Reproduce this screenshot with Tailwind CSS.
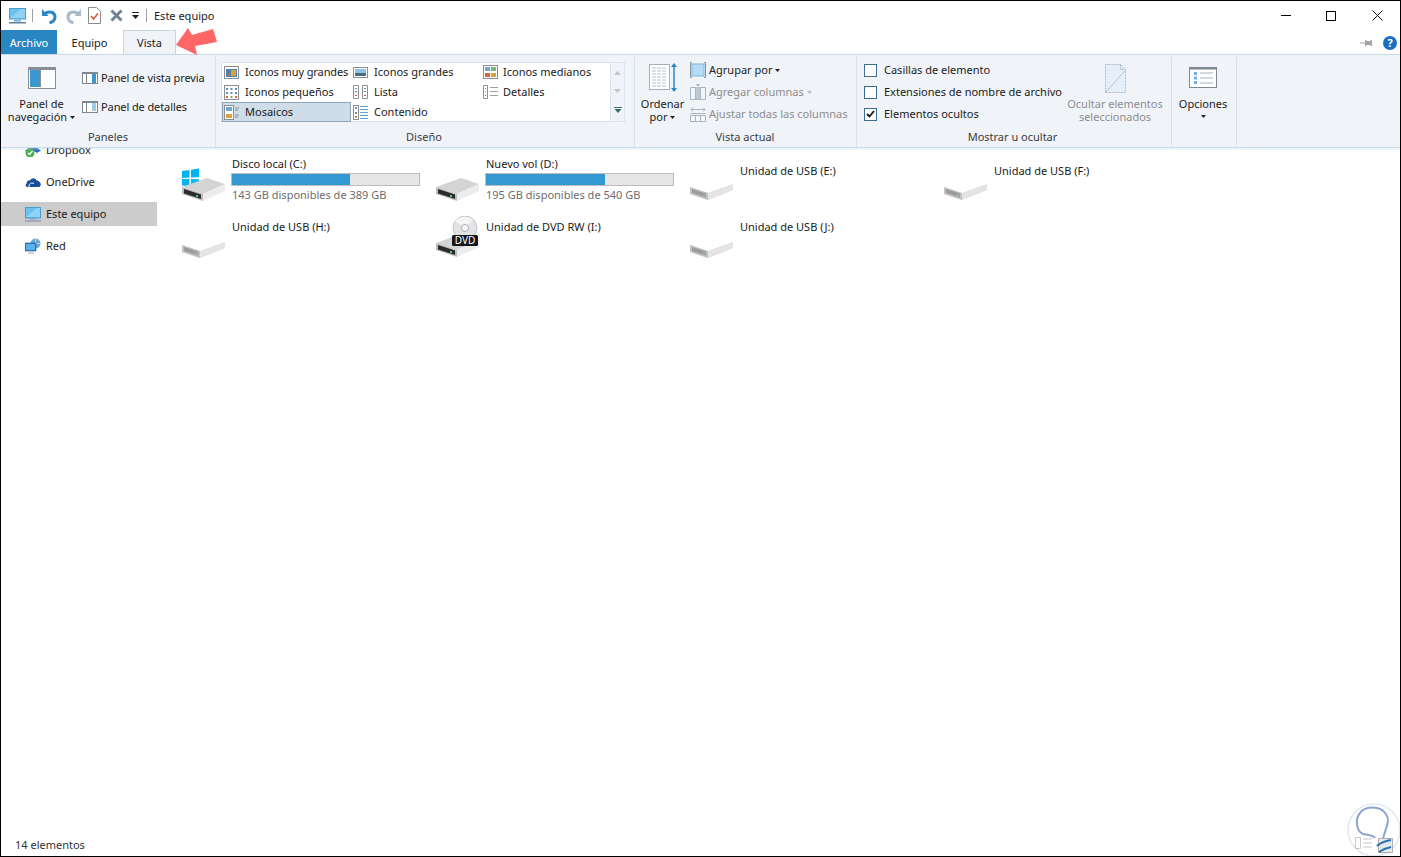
<!DOCTYPE html>
<html><head><meta charset="utf-8"><script src="https://cdn.jsdelivr.net/npm/@tailwindcss/browser@4"></script></head>
<body class="m-0 bg-white">
<div class="w-[1401px] h-[857px] border border-black bg-white text-[11px] leading-[16px] whitespace-nowrap text-[#1a1a1a] font-['Noto_Sans','Open_Sans',sans-serif] flex flex-col overflow-hidden relative">
  <!-- title bar -->
  <div class="h-[29px] flex items-center shrink-0">
    <svg class="ml-[8px]" width="17" height="16" viewBox="0 0 17 16"><rect x="0.5" y="0.5" width="16" height="10.5" fill="#6cc0f0" stroke="#4a9bd0"/><path d="M1 10L12 1h4v9z" fill="#8fd3f6"/><rect x="5" y="12" width="7" height="1.5" fill="#7aa7c7"/><rect x="0" y="14" width="17" height="1.5" fill="#5f7fa0"/></svg>
    <div class="w-px h-[13px] bg-[#a0a0a0] ml-[6px]"></div>
    <svg class="ml-[9px]" width="15" height="16" viewBox="0 0 15 16"><path d="M0 1v7h6.500z" fill="#2a86c4"/><path d="M2.500 6C7 2.500 13 4 13 9c0 3-2.500 5-5.500 6" fill="none" stroke="#2a86c4" stroke-width="3"/></svg>
    <svg class="ml-[9px]" width="15" height="16" viewBox="0 0 15 16"><path d="M15 1v7H8.500z" fill="#a9b8c6"/><path d="M12.500 6C8 2.500 2 4 2 9c0 3 2.500 5 5.500 6" fill="none" stroke="#a9b8c6" stroke-width="3"/></svg>
    <svg class="ml-[7px]" width="13" height="17" viewBox="0 0 13 17"><path d="M.5.500h8l4 4v12H.5z" fill="#fff" stroke="#8c8c8c"/><path d="M3 9l2.500 3L10 6.500" fill="none" stroke="#d9582b" stroke-width="1.500"/></svg>
    <svg class="ml-[9px]" width="13" height="13" viewBox="0 0 13 13"><path d="M1.500 1.500l10 10M11.500 1.500l-10 10" stroke="#6d8398" stroke-width="3"/></svg>
    <svg class="ml-[9px]" width="8" height="8" viewBox="0 0 8 8"><rect x="0" y="0" width="7" height="1" fill="#222"/><path d="M0 3h7L3.500 7z" fill="#222"/></svg>
    <div class="w-px h-[13px] bg-[#a0a0a0] ml-[6px]"></div>
    <span class="ml-[7px]">Este equipo</span>
    <div class="ml-auto flex items-center mr-[17px] gap-[35px]">
      <div class="w-[10px] h-px bg-black"></div>
      <div class="w-[10px] h-[10px] border border-black mr-[1px]"></div>
      <svg width="11" height="11" viewBox="0 0 11 11"><path d="M.5.500l10 10M10.500.500l-10 10" stroke="#111" stroke-width="1"/></svg>
    </div>
  </div>
  <!-- tabs -->
  <div class="h-[24px] flex items-stretch shrink-0 relative">
    <div class="w-[56px] bg-[#2a86c0] text-white flex items-center justify-center pt-[2px]">Archivo</div>
    <div class="w-[66px] flex items-center justify-center pt-[2px] pr-[1px]">Equipo</div>
    <div class="w-[53px] h-[25px] bg-[#f0f4f9] border border-b-0 border-[#c6d8e6] flex items-center justify-center relative z-10">Vista</div>
    <div class="ml-auto flex items-center gap-[11px] mr-[3px] pt-[2px]">
      <svg width="12" height="8" viewBox="0 0 12 8"><path d="M0 3.500h5V1h1l1 1h3l1-1h1v6h-1l-1-1H7L6 7H5V4.500H0z" fill="#a5a5a5"/></svg>
      <div class="w-[14px] h-[14px] rounded-full bg-[#1b6fc2] text-white font-bold text-[11px] leading-[14px] text-center">?</div>
    </div>
    <svg class="absolute left-[172px] top-[-3px] z-20" width="46" height="29" viewBox="0 0 46 29"><path d="M3 18L15 1l4 7 21-6 4 13-22 4 2 9z" fill="#ff6666"/></svg>
  </div>
  <!-- ribbon -->
  <div class="h-[94px] bg-[#f0f4f9] border-t border-[#c6d8e6] border-b border-b-[#c9dcea] shrink-0 flex relative z-10 shadow-[0_1px_2px_rgba(190,210,225,0.5)]">
    <!-- Paneles -->
    <div class="w-[215px] border-r border-[#dbe1e8] mt-[2px] flex flex-col shrink-0">
      <div class="flex-1 flex">
        <div class="w-[81px] flex flex-col items-center">
          <svg class="mt-[10px]" width="28" height="22" viewBox="0 0 28 22"><rect x=".5" y=".5" width="27" height="21" fill="#fff" stroke="#8a8f96"/><rect x="1" y="1" width="26" height="2" fill="#8a8f96"/><rect x="2" y="3" width="10" height="17" fill="#3a97d0"/><rect x="12" y="3" width="1" height="17" fill="#8a8f96"/></svg>
          <div class="text-center leading-[13px] mt-[8px]">Panel de<br>navegación<svg class="inline-block ml-[3px] align-[2px]" width="5" height="3" viewBox="0 0 5 3"><path d="M0 0h5L2.500 3z" fill="#222"/></svg></div>
        </div>
        <div class="flex flex-col">
          <div class="flex items-center mt-[13px] gap-[3px]">
            <svg width="16" height="12" viewBox="0 0 16 12"><rect x=".5" y=".5" width="15" height="11" fill="#fff" stroke="#7f8790"/><rect x="1" y="1" width="14" height="1" fill="#7f8790"/><rect x="4" y="2" width="1" height="9" fill="#7f8790"/><rect x="10" y="2" width="4" height="9" fill="#3a97d0"/></svg>
            <span class="tracking-[-0.1px]">Panel de vista previa</span>
          </div>
          <div class="flex items-center mt-[13px] gap-[3px]">
            <svg width="16" height="12" viewBox="0 0 16 12"><rect x=".5" y=".5" width="15" height="11" fill="#fff" stroke="#7f8790"/><rect x="1" y="1" width="14" height="1" fill="#7f8790"/><rect x="4" y="2" width="1" height="9" fill="#7f8790"/><path d="M10 3h4M10 5h4M10 7h4M10 9h4" stroke="#3a97d0"/></svg>
            <span class="tracking-[-0.1px]">Panel de detalles</span>
          </div>
        </div>
      </div>
      <div class="h-[17px] text-center text-[#3c3c3c] mb-[1px]">Paneles</div>
    </div>
    <!-- Diseño -->
    <div class="w-[419px] border-r border-[#dbe1e8] mt-[2px] flex flex-col shrink-0">
      <div class="flex-1 pl-[5px] pt-[5px]">
        <div class="w-[404px] h-[60px] bg-white border border-[#dbe5ee] flex">
          <div class="flex-1 grid grid-cols-[129px_129px_1fr] grid-rows-[20px_20px_20px] mt-[-1px]">
            <div class="flex items-center"><svg class="ml-[2px] mr-[6px]" width="15" height="13" viewBox="0 0 15 13"><rect x=".5" y=".5" width="14" height="12" fill="#fff" stroke="#8a8f96"/><rect x="2" y="3" width="11" height="8" fill="#4b83b0"/><rect x="7" y="4" width="5" height="6" fill="#d9a23b"/><rect x="3" y="7" width="3" height="3" fill="#d65a35"/></svg><span class="tracking-[-0.1px]">Iconos muy grandes</span></div>
            <div class="flex items-center"><svg class="ml-[2px] mr-[6px]" width="15" height="13" viewBox="0 0 15 13"><rect x=".5" y="1.500" width="14" height="10" fill="#fff" stroke="#8a8f96"/><rect x="2" y="3" width="11" height="4" fill="#8cc4e8"/><rect x="2" y="7" width="11" height="3" fill="#4d6a7e"/></svg><span>Iconos grandes</span></div>
            <div class="flex items-center"><svg class="ml-[3px] mr-[5px]" width="15" height="14" viewBox="0 0 15 14"><rect x=".5" y=".5" width="14" height="13" fill="#fff" stroke="#8a8f96"/><rect x="2" y="2" width="5" height="4" fill="#6fa9d4"/><rect x="8" y="2" width="5" height="4" fill="#7fb27a"/><rect x="2" y="8" width="5" height="4" fill="#d6643c"/><rect x="8" y="8" width="5" height="4" fill="#d9a23b"/></svg><span>Iconos medianos</span></div>
            <div class="flex items-center"><svg class="ml-[2px] mr-[6px]" width="15" height="15" viewBox="0 0 15 15"><rect x=".5" y=".5" width="14" height="14" fill="#fff" stroke="#8a8f96"/><path d="M2 3h2v2H2zM6.500 3h2v2h-2zM11 3h2v2h-2zM2 7h2v2H2zM6.500 7h2v2h-2zM11 7h2v2h-2z" fill="#6d8ea8"/><path d="M2 11h2v2H2zM11 11h2v2h-2z" fill="#cf6a3f"/><path d="M6.500 11h2v2h-2z" fill="#7fa35d"/></svg><span>Iconos pequeños</span></div>
            <div class="flex items-center"><svg class="ml-[2px] mr-[6px]" width="15" height="14" viewBox="0 0 15 14"><path d="M.5.500h5v13h-5zM9.500.500h5v13h-5z" fill="#fff" stroke="#8a8f96"/><path d="M2 3h2v1H2zM2 6h2v1H2zM11 3h2v1h-2zM11 6h2v1h-2z" fill="#6d8ea8"/><path d="M2 10h2v1H2zM11 10h2v1h-2z" fill="#cf4a3f"/></svg><span>Lista</span></div>
            <div class="flex items-center"><svg class="ml-[3px] mr-[5px]" width="15" height="14" viewBox="0 0 15 14"><path d="M.5.500h4v13h-4z" fill="#fff" stroke="#8a8f96"/><path d="M2 3h1v1H2zM2 6h1v1H2z" fill="#6d8ea8"/><path d="M2 10h1v1H2z" fill="#cf4a3f"/><path d="M7 2.500h8M7 6.500h8M7 10.500h8" stroke="#9aa0a6"/></svg><span>Detalles</span></div>
            <div class="flex items-center bg-[#cfdde8] border border-[#8fa5b8] w-[129px] h-[20px]"><svg class="ml-[1px] mr-[6px]" width="15" height="15" viewBox="0 0 15 15"><rect x=".5" y=".5" width="9" height="14" fill="#fff" stroke="#8a8f96"/><rect x="2" y="2" width="6" height="4" fill="#6fa9d4"/><rect x="2" y="9" width="6" height="4" fill="#d9a23b"/><path d="M11 3h4M11 5h3M11 10h4M11 12h3" stroke="#8a8f96"/></svg><span>Mosaicos</span></div>
            <div class="flex items-center"><svg class="ml-[2px] mr-[6px]" width="15" height="15" viewBox="0 0 15 15"><rect x=".5" y=".5" width="5" height="14" fill="#fff" stroke="#8a8f96"/><path d="M2 2h2v2H2zM2 7h2v2H2z" fill="#6d8ea8"/><path d="M2 11h2v2H2z" fill="#cf8a3f"/><path d="M7 1.500h8M7 4.500h8M7 7.500h8M7 10.500h8M7 13.500h8" stroke="#5aa0d8"/></svg><span>Contenido</span></div>
            <div></div>
          </div>
          <div class="w-[14px] border-l border-[#dbe5ee] bg-[#f0f4f9] flex flex-col items-center justify-around py-[1px]">
            <svg width="7" height="4" viewBox="0 0 7 4"><path d="M3.500 0L7 4H0z" fill="#c0c6cc"/></svg>
            <svg width="7" height="4" viewBox="0 0 7 4"><path d="M3.500 4L7 0H0z" fill="#c0c6cc"/></svg>
            <svg width="8" height="6" viewBox="0 0 8 6"><rect width="8" height="1" fill="#2f6f6a"/><path d="M.5 2h7L4 6z" fill="#2f6f6a"/></svg>
          </div>
        </div>
      </div>
      <div class="h-[17px] text-center text-[#3c3c3c] mb-[1px] pr-[2px]">Diseño</div>
    </div>
    <!-- Vista actual -->
    <div class="w-[222px] border-r border-[#dbe1e8] mt-[2px] flex flex-col shrink-0">
      <div class="flex-1 flex">
        <div class="w-[55px] flex flex-col items-center">
          <svg class="mt-[6px] ml-[1px]" width="28" height="29" viewBox="0 0 28 29"><rect x=".5" y="1.500" width="20" height="25" fill="#fff" stroke="#a5adb5"/><path d="M3 5h15M3 8h15M3 11h15M3 14h15M3 17h15M3 20h15M3 23h15" stroke="#b8c0c8" stroke-dasharray="4 1"/><path d="M25 2v25" stroke="#2a86c4" stroke-width="1.500"/><path d="M25 0l3 4h-6zM25 29l3-4h-6z" fill="#2a86c4"/></svg>
          <div class="text-center leading-[13px] mt-[5px]">Ordenar<br>por<svg class="inline-block ml-[3px] align-[2px]" width="5" height="3" viewBox="0 0 5 3"><path d="M0 0h5L2.500 3z" fill="#222"/></svg></div>
        </div>
        <div class="flex flex-col pt-[5px] gap-[6px]">
          <div class="flex items-center gap-[3px] h-[16px]"><svg width="16" height="16" viewBox="0 0 16 16"><rect x="2" y="2" width="12" height="12" fill="#b5dcf5" stroke="#7fb2d6"/><path d="M2 .500H.5v15H2M14 .500h1.500v15H14" fill="none" stroke="#8a8f96"/></svg><span class="text-[#222]">Agrupar por<svg class="inline-block ml-[3px] align-[2px]" width="5" height="3" viewBox="0 0 5 3"><path d="M0 0h5L2.500 3z" fill="#222"/></svg></span></div>
          <div class="flex items-center gap-[3px] h-[16px]"><svg width="16" height="16" viewBox="0 0 16 16"><path d="M.5 3.500h15v12H.5z" fill="#f4f7fa" stroke="#a8b4c0"/><path d="M5.500 3.500v12M10.500 3.500v12" stroke="#a8b4c0"/><rect x="6" y="3" width="4" height="12" fill="#bccad6"/><path d="M6 0h4L8 3z" fill="#a8b4c0"/></svg><span class="text-[#8d8d8d]">Agregar columnas<svg class="inline-block ml-[3px] align-[2px]" width="5" height="3" viewBox="0 0 5 3"><path d="M0 0h5L2.500 3z" fill="#bbb"/></svg></span></div>
          <div class="flex items-center gap-[3px] h-[16px]"><svg width="16" height="16" viewBox="0 0 16 16"><path d="M.5 9.500h15v6H.5z" fill="#f4f7fa" stroke="#a8b4c0"/><path d="M5.500 9.500v6M10.500 9.500v6M.5 7.500h15" stroke="#a8b4c0"/><path d="M1 3.500h14M1 3.500l2-2M1 3.500l2 2M15 3.500l-2-2M15 3.500l-2 2" stroke="#a8b4c0" fill="none"/></svg><span class="text-[#8d8d8d]">Ajustar todas las columnas</span></div>
        </div>
      </div>
      <div class="h-[17px] text-center text-[#3c3c3c] mb-[1px] pr-[1px]">Vista actual</div>
    </div>
    <!-- Mostrar u ocultar -->
    <div class="w-[315px] border-r border-[#dbe1e8] mt-[2px] flex flex-col shrink-0">
      <div class="flex-1 flex">
        <div class="w-[202px] flex flex-col pl-[7px] pt-[5px] gap-[6px]">
          <div class="flex items-center h-[16px] gap-[7px]"><div class="w-[13px] h-[13px] shrink-0 bg-white border border-[#3d6d8e]"></div><span>Casillas de elemento</span></div>
          <div class="flex items-center h-[16px] gap-[7px]"><div class="w-[13px] h-[13px] shrink-0 bg-white border border-[#3d6d8e]"></div><span>Extensiones de nombre de archivo</span></div>
          <div class="flex items-center h-[16px] gap-[7px]"><div class="w-[13px] h-[13px] shrink-0 bg-white border border-[#3d6d8e] flex items-center justify-center"><svg width="9" height="8" viewBox="0 0 9 8"><path d="M1 4l2.500 2.500L8 1" fill="none" stroke="#111" stroke-width="1.800"/></svg></div><span>Elementos ocultos</span></div>
        </div>
        <div class="flex-1 flex flex-col items-center">
          <svg class="mt-[7px]" width="21" height="29" viewBox="0 0 21 29"><path d="M.5.500h15l5 5v23H.5z" fill="#e6eefa"/><path d="M.5 28.500L20.500 6" stroke="#b5c6d8"/><path d="M.5.500h15v5h5M.5 28.500V.5M.5 28.500h20v-23l-5-5" fill="none" stroke="#a9bccd" stroke-dasharray="2 1"/></svg>
          <div class="text-center leading-[13px] mt-[4px] text-[#8d8d8d]">Ocultar elementos<br>seleccionados</div>
        </div>
      </div>
      <div class="h-[17px] text-center text-[#3c3c3c] mb-[1px] pr-[3px]">Mostrar u ocultar</div>
    </div>
    <!-- Opciones -->
    <div class="w-[65px] border-r border-[#dbe1e8] mt-[2px] pr-[2px] flex flex-col items-center shrink-0">
      <svg class="mt-[10px]" width="28" height="21" viewBox="0 0 28 21"><rect x=".5" y=".5" width="27" height="20" fill="#fff" stroke="#7f8790"/><rect x="1" y="1" width="26" height="1.500" fill="#7f8790"/><path d="M5 5h3v3H5zM5 9.500h3v3H5zM5 14h3v3H5z" fill="#6fb0de"/><path d="M11 6h13M11 11h13M11 16h13" stroke="#a9b0b8"/></svg>
      <div class="mt-[8px]">Opciones</div>
      <svg class="mt-[3px]" width="5" height="3" viewBox="0 0 5 3"><path d="M0 0h5L2.500 3z" fill="#222"/></svg>
    </div>
  </div>
  <!-- body -->
  <div class="flex-1 flex min-h-0">
    <div class="w-[156px] shrink-0 overflow-hidden">
      <div class="flex flex-col gap-[8px] mt-[-10px]">
        <div class="h-[24px] flex items-center pl-[24px] gap-[5px]">
          <svg width="16" height="14" viewBox="0 0 16 14"><path d="M4 0L8 2.500 12 0 16 2.500 12 5 16 7.500 12 10 8 7.500 4 10 0 7.500 4 5 0 2.500z" fill="#2a6fbb"/><circle cx="5" cy="10" r="4.500" fill="#4caf50"/><path d="M3 10l1.500 1.500L7.500 8" stroke="#fff" stroke-width="1.200" fill="none"/></svg>
          <span>Dropbox</span></div>
        <div class="h-[24px] flex items-center pl-[24px] gap-[5px]">
          <svg width="16" height="10" viewBox="0 0 16 10"><path d="M2.500 10C.5 10 0 7.500 1.500 6.500 2 3.500 4 3 5 3.500 6.500 .5 10.500.5 11.500 3.500 14.500 3.500 16.500 7 15.500 8.500 15 9.500 14.500 10 13.500 10z" fill="#1b4f9c"/><path d="M4 10C3.500 7 6.500 5 9 6.500" fill="none" stroke="#fff"/></svg>
          <span>OneDrive</span></div>
        <div class="h-[24px] flex items-center pl-[24px] gap-[5px] bg-[#cccccc]">
          <svg width="16" height="15" viewBox="0 0 16 15"><rect x=".5" y=".5" width="15" height="10.500" fill="#6cc0f0" stroke="#4a9bd0"/><path d="M1 10L12 1h3v9z" fill="#8fd3f6"/><rect x="5" y="11.500" width="6" height="1" fill="#7aa7c7"/><rect x="0" y="13.500" width="16" height="1" fill="#8080b0"/></svg>
          <span>Este equipo</span></div>
        <div class="h-[24px] flex items-center pl-[24px] gap-[5px]">
          <svg width="16" height="16" viewBox="0 0 16 16"><circle cx="10.500" cy="5.500" r="5" fill="#6aa8d8"/><path d="M10.500.5v10M5.500 5.500h10" stroke="#d8ecf8" stroke-width=".7"/><rect x="0" y="5" width="11" height="8" fill="#2f7fc4" stroke="#1f5f9c" stroke-width=".6"/><rect x="1" y="6" width="9" height="6" fill="#5ab0ea"/><rect x="3" y="14.500" width="6" height="1" fill="#9aa8b8"/></svg>
          <span>Red</span></div>
      </div>
    </div>
    <div class="flex-1 pl-[22px] pt-[7px]">
      <div class="grid grid-cols-[254px_254px_254px_254px] grid-rows-[62px_62px] w-max">
        <!-- C -->
        <div class="flex">
          <svg class="mt-[13px] ml-[3px] shrink-0" width="44" height="33" viewBox="0 0 44 33"><path d="M0 3L7.500 2v7.500L0 10zM9 1.700L17 .5v8.800L9 9.500zM0 11L7.500 11v7L0 17.500zM9 11l8 .3V19L9 18z" fill="#00b4f0"/><path d="M0 19l25-9 18 6-22 10z" fill="#d4d4d4"/><path d="M21 26l22-10v7l-22 10z" fill="#ececec"/><path d="M0 19l21 7v7L0 26z" fill="#bdbdbd"/><path d="M2 21l17 5.500v4.500L2 25.500z" fill="#2b2b2b"/><rect x="14" y="27" width="2" height="2" fill="#3bd06a"/></svg>
          <div class="ml-[6px] w-[190px] pt-[1px]">
            <div class="h-[16px]">Disco local (C:)</div>
            <div class="h-[13px] w-[189px] mt-[1px] bg-[#e6e6e6] border border-[#bcbcbc] ml-[-1px]"><div class="h-full w-[63%] bg-[#3399d0]"></div></div>
            <div class="h-[16px] mt-[1px] text-[#6d6d6d]">143 GB disponibles de 389 GB</div>
          </div>
        </div>
        <!-- D -->
        <div class="flex">
          <svg class="mt-[23px] ml-[3px] shrink-0" width="44" height="23" viewBox="0 0 44 23"><path d="M0 9L25 0l18 6-22 10z" fill="#d4d4d4"/><path d="M21 16L43 6v7L21 23z" fill="#ececec"/><path d="M0 9l21 7v7L0 16z" fill="#bdbdbd"/><path d="M2 11l17 5.500V21L2 15.500z" fill="#2b2b2b"/><rect x="14" y="17" width="2" height="2" fill="#3bd06a"/></svg>
          <div class="ml-[6px] w-[190px] pt-[1px]">
            <div class="h-[16px]">Nuevo vol (D:)</div>
            <div class="h-[13px] w-[189px] mt-[1px] bg-[#e6e6e6] border border-[#bcbcbc] ml-[-1px]"><div class="h-full w-[63.500%] bg-[#3399d0]"></div></div>
            <div class="h-[16px] mt-[1px] text-[#6d6d6d]">195 GB disponibles de 540 GB</div>
          </div>
        </div>
        <!-- E -->
        <div class="flex">
          <svg class="mt-[28px] ml-[3px] shrink-0" width="44" height="17" viewBox="0 0 44 17"><path d="M0 4l18 6 25-9v6L18 17 0 11z" fill="#dcdcdc"/><path d="M18 10L43 1v6L18 17z" fill="#e4e4e4"/><path d="M0 4l18 6v7L0 11z" fill="#c2c2c2"/><path d="M2 6l14 4.500v4L2 10z" fill="#9c9c9c"/><rect x="13" y="11.500" width="2" height="1.500" fill="#7fd08a"/></svg>
          <div class="ml-[6px] pt-[8px]">Unidad de USB (E:)</div>
        </div>
        <!-- F -->
        <div class="flex">
          <svg class="mt-[28px] ml-[3px] shrink-0" width="44" height="17" viewBox="0 0 44 17"><path d="M0 4l18 6 25-9v6L18 17 0 11z" fill="#dcdcdc"/><path d="M18 10L43 1v6L18 17z" fill="#e4e4e4"/><path d="M0 4l18 6v7L0 11z" fill="#c2c2c2"/><path d="M2 6l14 4.500v4L2 10z" fill="#9c9c9c"/><rect x="13" y="11.500" width="2" height="1.500" fill="#7fd08a"/></svg>
          <div class="ml-[6px] pt-[8px]">Unidad de USB (F:)</div>
        </div>
        <!-- H -->
        <div class="flex">
          <svg class="mt-[24px] ml-[3px] shrink-0" width="44" height="17" viewBox="0 0 44 17"><path d="M0 4l18 6 25-9v6L18 17 0 11z" fill="#dcdcdc"/><path d="M18 10L43 1v6L18 17z" fill="#e4e4e4"/><path d="M0 4l18 6v7L0 11z" fill="#c2c2c2"/><path d="M2 6l14 4.500v4L2 10z" fill="#9c9c9c"/><rect x="13" y="11.500" width="2" height="1.500" fill="#7fd08a"/></svg>
          <div class="ml-[6px] pt-[2px]">Unidad de USB (H:)</div>
        </div>
        <!-- I -->
        <div class="flex">
          <svg class="mt-[-1px] ml-[3px] shrink-0" width="44" height="41" viewBox="0 0 44 41"><path d="M0 27l25-9 18 6-22 10z" fill="#d4d4d4"/><path d="M21 34l22-10v7L21 41z" fill="#ececec"/><path d="M0 27l21 7v7L0 34z" fill="#bdbdbd"/><path d="M2 29l17 5.500V39L2 33.500z" fill="#2b2b2b"/><rect x="14" y="35" width="2" height="2" fill="#3bd06a"/><circle cx="29" cy="12" r="12" fill="#e3e3e6" stroke="#c4c4c8"/><path d="M29 12L19 5a12.500 12.500 0 0 1 18-1z" fill="#f4f4f6"/><circle cx="29" cy="12" r="3.500" fill="#fff" stroke="#a8a8b0"/><rect x="16" y="19" width="26" height="11" rx="1.500" fill="#16161c"/><text x="29" y="28" text-anchor="middle" font-size="10" fill="#fff" font-family="Noto Sans">DVD</text></svg>
          <div class="ml-[6px] pt-[2px]">Unidad de DVD RW (I:)</div>
        </div>
        <!-- J -->
        <div class="flex">
          <svg class="mt-[24px] ml-[3px] shrink-0" width="44" height="17" viewBox="0 0 44 17"><path d="M0 4l18 6 25-9v6L18 17 0 11z" fill="#dcdcdc"/><path d="M18 10L43 1v6L18 17z" fill="#e4e4e4"/><path d="M0 4l18 6v7L0 11z" fill="#c2c2c2"/><path d="M2 6l14 4.500v4L2 10z" fill="#9c9c9c"/><rect x="13" y="11.500" width="2" height="1.500" fill="#7fd08a"/></svg>
          <div class="ml-[6px] pt-[2px]">Unidad de USB (J:)</div>
        </div>
      </div>
    </div>
  </div>
  <div class="h-[22px] shrink-0 flex items-center pl-[14px] text-[#333]">14 elementos</div>
  <!-- watermark -->
  <svg class="absolute left-[1346px] top-[802px] pointer-events-none" width="53" height="53" viewBox="0 0 53 53"><circle cx="27" cy="27" r="26" fill="#fff" stroke="#e3e8f2" stroke-width="1.500"/><path d="M28 35C26 32 22 32 16 31 9 28 8 16 13 10 18 3 33 2 39 11 44 18 38 26 36 36" fill="none" stroke="#8aa4d4" stroke-width="2"/><path d="M8.500 34.500h5v11h-5z" fill="#fff" stroke="#c8c8c8"/><path d="M16 36h9M16 40h9M16 44h9" stroke="#c8c8c8"/><path d="M31.500 35.500h14v14h-14z" fill="#e8e8e8" stroke="#b0b0b0"/><path d="M30 43c4-4 8-5 14-6M32 49c4-3 7-4 12-5" stroke="#2b6fb5" stroke-width="2" fill="none"/></svg>
</div>
</body></html>
